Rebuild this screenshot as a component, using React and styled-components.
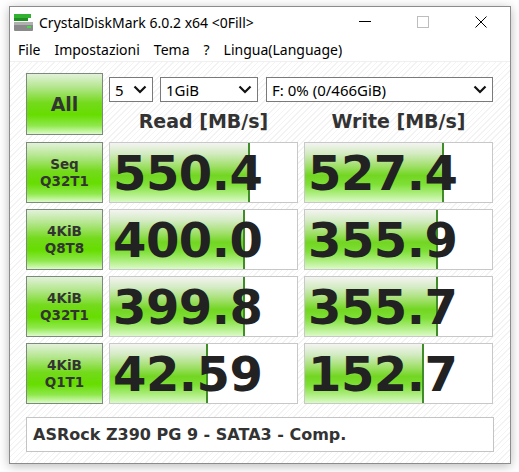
import React from "react";
import styled, { createGlobalStyle } from "styled-components";

const Global = createGlobalStyle`
  html, body {
    margin: 0;
    padding: 0;
    background: #ffffff;
  }
  body {
    width: 519px;
    height: 472px;
    overflow: hidden;
  }
`;

const Stage = styled.div`
  padding: 6px 9px 9px 9px;
  width: 519px;
  height: 472px;
  box-sizing: border-box;
`;

const Window = styled.div`
  width: 502px;
  height: 458px;
  box-sizing: border-box;
  border: 1px solid #8c8c8c;
  background: #fff;
  box-shadow: 0 2px 10px rgba(0, 0, 0, 0.28);
  display: flex;
  flex-direction: column;
`;

const TitleBar = styled.div`
  height: 30px;
  display: flex;
  align-items: center;
  padding-left: 3px;
  font-family: "Noto Sans", "Open Sans", sans-serif;
  font-size: 14px;
  color: #000;
`;

const Title = styled.span`
  margin-left: 5px;
  flex: 1;
  white-space: nowrap;
`;

const Controls = styled.div`
  display: flex;
  height: 100%;
`;

const CtrlButton = styled.div`
  width: 58px;
  height: 100%;
  display: flex;
  align-items: center;
  justify-content: center;
`;

const MenuBar = styled.div`
  height: 24px;
  display: flex;
  align-items: center;
  padding-left: 1px;
  font-family: "Noto Sans", "Open Sans", sans-serif;
  font-size: 14px;
  color: #000;
  border-bottom: 1px solid #f0f0f0;
`;

const MenuItem = styled.span`
  padding: 0 7px;
  white-space: nowrap;
`;

const Content = styled.div`
  flex: 1;
  padding: 11px 16px 0 16px;
  background: repeating-linear-gradient(
    135deg,
    #ffffff 0px,
    #ffffff 3px,
    #f3f3f3 3px,
    #f3f3f3 4px
  );
`;

const Grid = styled.div`
  display: grid;
  grid-template-columns: 77px 189px 189px;
  grid-template-rows: 63px repeat(4, 61px);
  column-gap: 6px;
  row-gap: 6px;
`;

const GreenButton = styled.div`
  box-sizing: border-box;
  border: 1px solid #7b8a7b;
  background: linear-gradient(
    to bottom,
    #e2f2da 0%,
    #b4e68e 22%,
    #74da1c 48%,
    #66dd00 68%,
    #8fe84c 86%,
    #c6f6a4 96%,
    #def9cc 100%
  );
  display: flex;
  flex-direction: column;
  align-items: center;
  justify-content: center;
  font-family: "DejaVu Sans", Verdana, sans-serif;
  font-weight: bold;
  color: #333;
  font-size: ${(p) => (p.$big ? "19px" : "13.5px")};
  line-height: ${(p) => (p.$big ? "1" : "17px")};
  margin-bottom: ${(p) => (p.$big ? "1px" : "0")};
`;

const TopArea = styled.div`
  grid-column: 2 / 4;
  display: flex;
  flex-direction: column;
`;

const SelectRow = styled.div`
  display: flex;
  margin-top: 4px;
`;

const Select = styled.div`
  box-sizing: border-box;
  height: 25px;
  width: ${(p) => p.$w}px;
  margin-left: ${(p) => p.$ml || 0}px;
  border: 1px solid #7a7a7a;
  background: #fff;
  display: flex;
  align-items: center;
  justify-content: space-between;
  padding: 0 5px 0 5px;
  font-family: "Noto Sans", "Open Sans", sans-serif;
  font-size: 15px;
  color: #000;
`;

const HeaderRow = styled.div`
  display: grid;
  grid-template-columns: 189px 189px;
  column-gap: 6px;
  flex: 1;
  align-items: center;
`;

const Header = styled.div`
  text-align: center;
  font-family: "DejaVu Sans", Verdana, sans-serif;
  font-weight: bold;
  font-size: 19px;
  color: #333;
  padding-top: 3px;
`;

const Cell = styled.div`
  position: relative;
  box-sizing: border-box;
  border: 1px solid #c8c8c8;
  background: #fff;
  overflow: hidden;
  display: flex;
  align-items: center;
`;

const Bar = styled.div`
  position: absolute;
  left: 0;
  top: 0;
  bottom: 0;
  box-sizing: border-box;
  border-right: 2px solid #3f8c28;
  background: linear-gradient(
    to bottom,
    #f3f4f1 0%,
    #d3ebc2 18%,
    #9edf66 40%,
    #72d622 55%,
    #7ee036 70%,
    #b4f08a 88%,
    #dcfac8 100%
  );
`;

const Value = styled.span`
  position: relative;
  padding-left: 3px;
  font-family: "DejaVu Sans", Verdana, sans-serif;
  font-weight: bold;
  font-size: 48px;
  letter-spacing: -0.5px;
  color: #222;
  line-height: 1;
`;

const Comment = styled.div`
  margin-top: 13px;
  height: 35px;
  box-sizing: border-box;
  border: 1px solid #c4c4c4;
  background: #fff;
  display: flex;
  align-items: center;
  padding-left: 6px;
  font-family: "DejaVu Sans", Verdana, sans-serif;
  font-weight: bold;
  font-size: 16px;
  color: #333;
`;

const Chevron = () => (
  <svg width="14" height="9" viewBox="0 0 14 9">
    <path d="M1.5 1.5 L7 7 L12.5 1.5" fill="none" stroke="#111" strokeWidth="2.2" />
  </svg>
);

const AppIcon = () => (
  <svg width="21" height="21" viewBox="0 0 21 21">
    <rect x="1" y="2" width="17" height="4" fill="#33b133" />
    <rect x="1" y="6" width="14" height="3" fill="#1f8f1f" />
    <rect x="1" y="10" width="19" height="9" rx="1" fill="#8a8a8a" />
    <rect x="1" y="10" width="19" height="3" fill="#b0b0b0" />
    <rect x="14" y="14" width="4" height="2" fill="#44dd44" />
  </svg>
);

const rows = [
  { label: ["Seq", "Q32T1"], read: "550.4", rw: 140, write: "527.4", ww: 139 },
  { label: ["4KiB", "Q8T8"], read: "400.0", rw: 135, write: "355.9", ww: 133 },
  { label: ["4KiB", "Q32T1"], read: "399.8", rw: 135, write: "355.7", ww: 133 },
  { label: ["4KiB", "Q1T1"], read: "42.59", rw: 98, write: "152.7", ww: 119 },
];

export default function App() {
  return (
    <>
      <Global />
      <Stage>
        <Window>
          <TitleBar>
            <AppIcon />
            <Title>CrystalDiskMark 6.0.2 x64 &lt;0Fill&gt;</Title>
            <Controls>
              <CtrlButton>
                <svg width="12" height="2" viewBox="0 0 12 2">
                  <rect width="12" height="1" fill="#000" />
                </svg>
              </CtrlButton>
              <CtrlButton>
                <svg width="12" height="12" viewBox="0 0 12 12">
                  <rect x="0.5" y="0.5" width="11" height="11" fill="none" stroke="#bdbdbd" />
                </svg>
              </CtrlButton>
              <CtrlButton>
                <svg width="12" height="12" viewBox="0 0 12 12">
                  <path d="M0.5 0.5 L11.5 11.5 M11.5 0.5 L0.5 11.5" stroke="#000" strokeWidth="1" />
                </svg>
              </CtrlButton>
            </Controls>
          </TitleBar>
          <MenuBar>
            <MenuItem>File</MenuItem>
            <MenuItem>Impostazioni</MenuItem>
            <MenuItem>Tema</MenuItem>
            <MenuItem>?</MenuItem>
            <MenuItem>Lingua(Language)</MenuItem>
          </MenuBar>
          <Content>
            <Grid>
              <GreenButton $big>All</GreenButton>
              <TopArea>
                <SelectRow>
                  <Select $w={44}>
                    5 <Chevron />
                  </Select>
                  <Select $w={98} $ml={7}>
                    1GiB <Chevron />
                  </Select>
                  <Select $w={227} $ml={8}>
                    F: 0% (0/466GiB) <Chevron />
                  </Select>
                </SelectRow>
                <HeaderRow>
                  <Header>Read [MB/s]</Header>
                  <Header>Write [MB/s]</Header>
                </HeaderRow>
              </TopArea>
              {rows.map((r, i) => (
                <React.Fragment key={i}>
                  <GreenButton>
                    <span>{r.label[0]}</span>
                    <span>{r.label[1]}</span>
                  </GreenButton>
                  <Cell>
                    <Bar style={{ width: r.rw }} />
                    <Value>{r.read}</Value>
                  </Cell>
                  <Cell>
                    <Bar style={{ width: r.ww }} />
                    <Value>{r.write}</Value>
                  </Cell>
                </React.Fragment>
              ))}
            </Grid>
            <Comment>ASRock Z390 PG 9 - SATA3 - Comp.</Comment>
          </Content>
        </Window>
      </Stage>
    </>
  );
}
